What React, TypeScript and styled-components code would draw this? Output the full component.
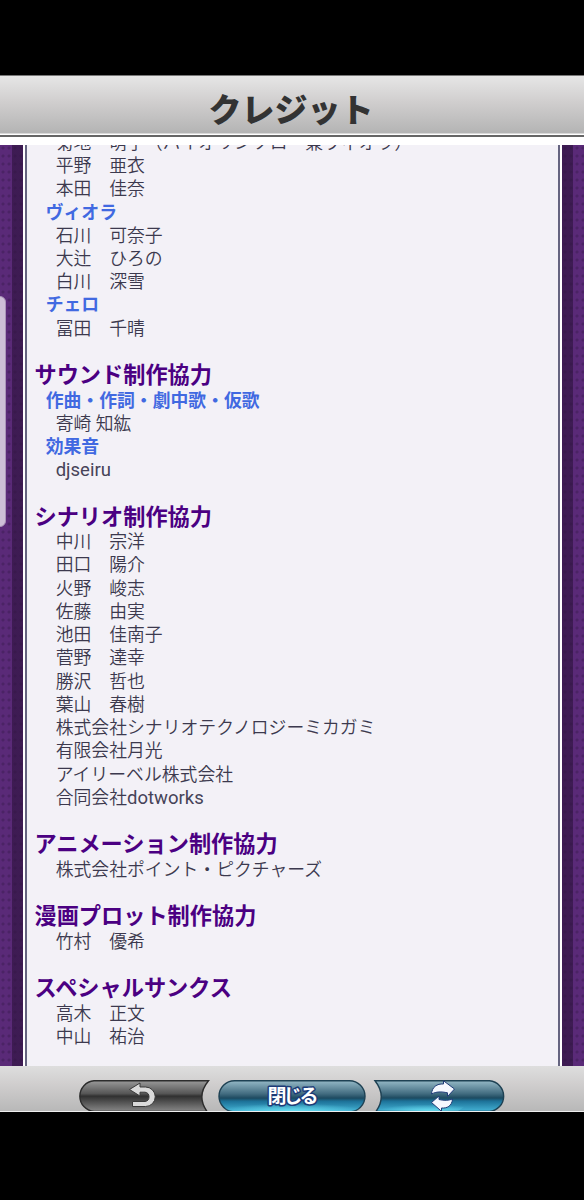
import React from "react";
import styled, { createGlobalStyle, css } from "styled-components";

const Global = createGlobalStyle`
  * { box-sizing: border-box; }
  body { margin: 0; background: #000; }
`;

const Screen = styled.div`
  width: 584px;
  height: 1200px;
  padding-top: 75px;
  display: flex;
  flex-direction: column;
  background: #000;
  overflow: hidden;
  font-family: Roboto, "Noto Sans CJK JP", sans-serif;
`;

const Header = styled.header`
  flex: none;
  height: 70px;
  border-bottom: 8px solid #fff;
`;

const HeaderBar = styled.div`
  height: 62px;
  border-top: 1px solid #777;
  border-bottom: 2px solid #666;
  background: linear-gradient(#e6e6e6 0, #d0cece 26px, #b4b4b4 57px, #fff 58px);
  display: flex;
  justify-content: center;
`;

const Title = styled.h1`
  margin: 0 2px 0 0;
  font: 900 33px/64px "Noto Sans CJK JP", sans-serif;
  color: #333;
`;

const Body = styled.main`
  flex: none;
  height: 921px;
  display: flex;
  position: relative;
  overflow: hidden;
`;

const Side = styled.div<{ $right?: boolean }>`
  width: ${(p) => (p.$right ? 22 : 23)}px;
  flex: none;
  background:
    linear-gradient(${(p) => (p.$right ? "to right" : "to left")}, #2f1440a8 11px, transparent 11px),
    radial-gradient(circle at 3px 3px, #4b2365 1px, transparent 2px) 0 0 / 6px 8px,
    #5a2a78;
`;

const Panel = styled.section`
  flex: 1;
  background: #f3f1f7;
  border: solid #fff;
  border-width: 0 2px;
  box-shadow: inset 2px 0 #656480, inset -2px 0 #656480;
  padding-left: 9.5px;
`;

const ScrollThumb = styled.div`
  position: absolute;
  left: -8px;
  top: 151px;
  width: 14px;
  height: 231px;
  border-radius: 6px;
  background: #cdbfd7;
  border: 1px solid #aa94b9;
`;

const Credits = styled.div`
  margin-top: -14.2px;
`;

const Group = styled.section`
  margin-bottom: 23.2px;
`;

const Heading = styled.h2`
  margin: 0;
  font-size: 22.2px;
  font-weight: 700;
  line-height: 25.5px;
  color: #4b0082;
`;

const line = css`
  margin: 0;
  font-size: 17.84px;
  line-height: 23.24px;
  white-space: pre;
`;

const Role = styled.h3`
  ${line}
  padding-left: 11.2px;
  font-weight: 700;
  color: #4169e1;
`;

const Name = styled.p`
  ${line}
  padding-left: 21.2px;
  font-weight: 350;
  color: #3c394e;
`;

const Latin = styled.span`
  font-weight: 400;
  font-size: 18.5px;
  line-height: 1;
  color: #464358;
`;

const Footer = styled.footer`
  flex: none;
  height: 46px;
  padding: 14px 78px 0;
  border-bottom: 1px solid #eee;
  background: linear-gradient(#dedede, #d0cece 18px, #b8b8b8);
  overflow: hidden;
`;

const Buttons = styled.svg`
  display: block;
  text { font: 700 19px "Noto Sans CJK JP", sans-serif; }
`;

type Block = { heading?: string; items: (string | { role: string })[] };

const blocks: Block[] = [
  {
    items: [
      "菊地　萌子（バイオリンソロ　兼ヴィオラ）", "平野　亜衣", "本田　佳奈",
      { role: "ヴィオラ" }, "石川　可奈子", "大辻　ひろの", "白川　深雪",
      { role: "チェロ" }, "冨田　千晴",
    ],
  },
  {
    heading: "サウンド制作協力",
    items: [{ role: "作曲・作詞・劇中歌・仮歌" }, "寄崎 知紘", { role: "効果音" }, "djseiru"],
  },
  {
    heading: "シナリオ制作協力",
    items: [
      "中川　宗洋", "田口　陽介", "火野　峻志", "佐藤　由実", "池田　佳南子", "菅野　達幸",
      "勝沢　哲也", "葉山　春樹", "株式会社シナリオテクノロジーミカガミ", "有限会社月光",
      "アイリーベル株式会社", "合同会社dotworks",
    ],
  },
  { heading: "アニメーション制作協力", items: ["株式会社ポイント・ピクチャーズ"] },
  { heading: "漫画プロット制作協力", items: ["竹村　優希"] },
  { heading: "スペシャルサンクス", items: ["高木　正文", "中山　祐治"] },
];

const NameText = ({ text }: { text: string }) => (
  <Name>
    {text.split(/([a-z]+)/).map((t, i) => (i % 2 ? <Latin key={i}>{t}</Latin> : t))}
  </Name>
);

export default function App() {
  return (
    <Screen>
      <Global />
      <Header>
        <HeaderBar><Title>クレジット</Title></HeaderBar>
      </Header>
      <Body>
        <Side />
        <Panel>
          <Credits>
            {blocks.map((b, i) => (
              <Group key={i}>
                {b.heading && <Heading>{b.heading}</Heading>}
                {b.items.map((it, j) =>
                  typeof it === "string" ? <NameText key={j} text={it} /> : <Role key={j}>{it.role}</Role>
                )}
              </Group>
            ))}
          </Credits>
        </Panel>
        <Side $right />
        <ScrollThumb />
      </Body>
      <Footer>
        <Buttons width="428" height="32" viewBox="0 0 428 32">
          <defs>
            <linearGradient id="gray" x1="0" y1="0" x2="0" y2="1">
              <stop offset="0" stopColor="#999" />
              <stop offset=".42" stopColor="#555" />
              <stop offset=".5" stopColor="#303030" />
              <stop offset="1" stopColor="#888" />
            </linearGradient>
            <linearGradient id="blue" x1="0" y1="0" x2="0" y2="1">
              <stop offset="0" stopColor="#94b8c6" />
              <stop offset=".42" stopColor="#426c80" />
              <stop offset=".56" stopColor="#1d4a60" />
              <stop offset=".66" stopColor="#1c7198" />
              <stop offset="1" stopColor="#45b4d6" />
            </linearGradient>
            <radialGradient id="glow" cx=".5" cy="1" r=".5">
              <stop offset="0" stopColor="#70e8f8" stopOpacity=".8" />
              <stop offset="1" stopColor="#70e8f8" stopOpacity="0" />
            </radialGradient>
          </defs>
          <path d="M16 .8H130.500Q118 16 129 31.500H16A15.400 15.400 0 0 1 16 .8Z" fill="url(#gray)" stroke="#2c2c2c" strokeWidth="1.4" />
          <rect x="141" y=".8" width="146" height="31" rx="15.5" fill="url(#blue)" stroke="#1e4153" strokeWidth="1.4" />
          <rect x="142" y="16" width="144" height="15" rx="7" fill="url(#glow)" />
          <path d="M297 .8H411.500A15.400 15.400 0 0 1 411.500 31.500H298Q309 16 297 .8Z" fill="url(#blue)" stroke="#1e4153" strokeWidth="1.4" />
          <path d="M303 18H400L380 31H300Z" fill="url(#glow)" />
          <path d="M51.500 9.500L62 3V7H67.500A9.700 9.700 0 0 1 67.500 26.500H54.500V21.500H67A4.700 4.700 0 0 0 67 12.200H62V16Z" fill="#dadada" stroke="#3a3a3a" strokeWidth="1" strokeLinejoin="round" />
          <text x="215" y="23" textAnchor="middle" fill="#fff" stroke="#1d3c78" strokeWidth="3" strokeLinejoin="round" paintOrder="stroke" textLength="51">閉じる</text>
          <g fill="#f6f8ff" stroke="#203c78" strokeWidth="1" strokeLinejoin="round">
            <path d="M353.500 14C354 7 359 3.500 365.500 4V.8L376.500 9L369.500 16.500V12.800C363 11.500 358.500 11.500 353.500 14Z" />
            <path d="M374.500 19C374 26 369 28.500 363.500 28V31.300L353.500 22.500L361 16V19.500C366 20.800 371 20.500 374.500 19Z" />
          </g>
        </Buttons>
      </Footer>
    </Screen>
  );
}
